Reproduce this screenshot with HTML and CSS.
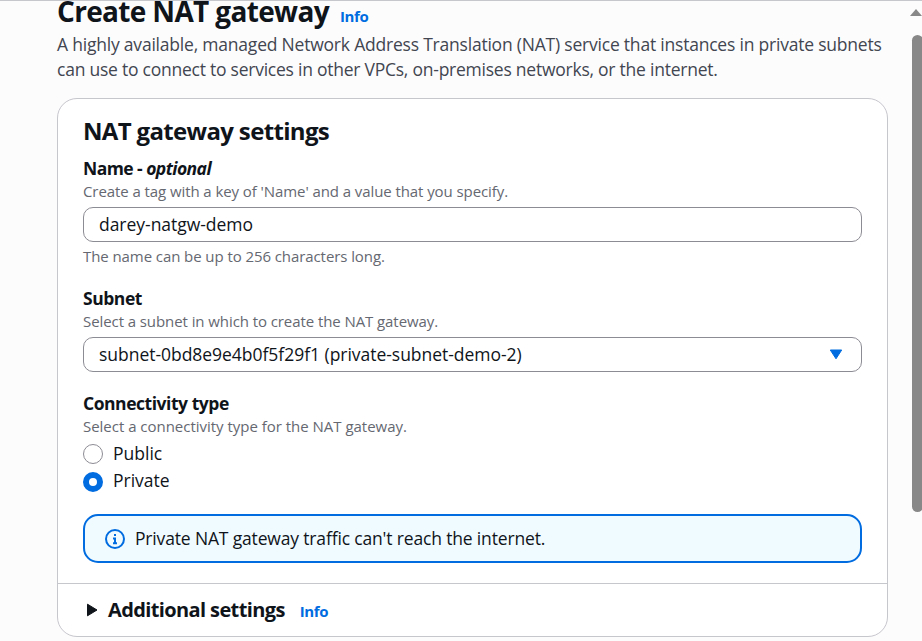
FILE: index.html
```html
<!DOCTYPE html>
<html lang="en">
<head>
<meta charset="utf-8">
<title>Create NAT gateway</title>
<link rel="stylesheet" href="styles.css">
</head>
<body>
<main class="page">
  <header class="head">
    <div class="title-row"><h1>Create NAT gateway</h1><a class="info">Info</a></div>
    <p class="intro">A highly available, managed Network Address Translation (NAT) service that instances in private subnets<br><span class="tight">can use to connect to services in other VPCs, on-premises networks, or the internet.</span></p>
  </header>
  <section class="card">
    <div class="body">
      <h2>NAT gateway settings</h2>
      <div class="field name">
        <label>Name - <em>optional</em></label>
        <p class="hint">Create a tag with a key of 'Name' and a value that you specify.</p>
        <div class="input"><span>darey-natgw-demo</span></div>
        <p class="hint below">The name can be up to 256 characters long.</p>
      </div>
      <div class="field subnet">
        <label>Subnet</label>
        <p class="hint">Select a subnet in which to create the NAT gateway.</p>
        <div class="input"><span>subnet-0bd8e9e4b0f5f29f1 (private-subnet-demo-2)</span>
          <svg width="14" height="11" viewBox="0 0 14 11"><path d="M1.3 1h11.4L7 9.8z" fill="#006ce0" stroke="#006ce0" stroke-linejoin="round"/></svg></div>
      </div>
      <div class="field conn">
        <label>Connectivity type</label>
        <p class="hint">Select a connectivity type for the NAT gateway.</p>
        <div class="radios">
          <div class="radio"><i class="dot"></i><span>Public</span></div>
          <div class="radio"><i class="dot on"></i><span>Private</span></div>
        </div>
      </div>
      <div class="alert">
        <svg width="20" height="20" viewBox="0 0 20 20" fill="none" stroke="#006ce0" stroke-width="2"><circle cx="10" cy="10" r="9"/><path d="M9 6h2M8 9.4h2V14M8 14.2h4"/></svg>
        <span>Private NAT gateway traffic can't reach the internet.</span>
      </div>
    </div>
    <div class="more">
      <svg width="12" height="14" viewBox="0 0 12 14"><path d="M1.5 1.2v11.6L11 7z" fill="#0f141a" stroke="#0f141a" stroke-linejoin="round"/></svg>
      <h3>Additional settings</h3><a class="info">Info</a>
    </div>
  </section>
</main>
<aside class="scroll"><i class="up"></i><i class="thumb"></i></aside>
</body>
</html>
```
FILE: styles.css
```css
* { box-sizing: border-box; margin: 0; }
body { display: flex; height: 641px; overflow: hidden; border-top: 1px solid #c6c6cd; background: #fcfcfd; font: 17.5px/25px "Open Sans", "Noto Sans", sans-serif; color: #0f141a; }
.page { width: 830px; margin-left: 57px; flex: none; }
.title-row { display: flex; align-items: baseline; height: 32px; margin-top: -6px; white-space: nowrap; }
h1 { font-size: 28px; line-height: 32px; font-weight: 700; letter-spacing: -0.66px; }
.info { color: #006ce0; font-size: 15px; font-weight: 700; letter-spacing: -0.35px; margin-left: 11px; }
.intro { color: #424650; margin-top: 5px; white-space: nowrap; letter-spacing: -0.21px; }
.tight { letter-spacing: -0.24px; }
.card { margin-top: 16px; width: 831px; height: 539px; border: 1px solid #c6c6cd; border-radius: 20px; background: #fff; }
.body { padding: 16px 25px 0; height: 484px; }
h2 { font-size: 24px; line-height: 32px; letter-spacing: -0.66px; }
label { display: block; font-weight: 700; line-height: 25px; letter-spacing: -0.46px; }
.name label { letter-spacing: -0.56px; }
.hint { font-size: 15px; line-height: 20px; color: #656871; white-space: nowrap; letter-spacing: -0.08px; }
.conn .hint { letter-spacing: -0.02px; }
.input { display: flex; align-items: center; justify-content: space-between; width: 779px; height: 35px; margin-top: 6px; padding: 0 18px 1px 15px; border: 1px solid #8c8c94; border-radius: 10px; letter-spacing: -0.03px; }
.radios { margin-top: 4px; }
.radio { display: flex; align-items: center; height: 27px; gap: 10px; line-height: 24px; }
.radio span { margin-top: -1px; }
.dot { width: 20px; height: 20px; border: 1px solid #8c8c94; border-radius: 50%; }
.dot.on { border: 6px solid #006ce0; margin-top: 2px; }
.alert { display: flex; align-items: center; gap: 10px; width: 779px; height: 49px; margin-top: 20px; padding-left: 20px; border: 2px solid #006ce0; border-radius: 15px; background: #f0fbff; letter-spacing: -0.16px; }
.name { margin-top: 9px; }
.below { margin-top: 4px; }
.subnet { margin-top: 20px; }
.conn { margin-top: 19px; }
.more { display: flex; align-items: center; height: 53px; padding-left: 28px; border-top: 1px solid #c6c6cd; }
h3 { font-size: 20px; margin: -1px 0 0 10px; letter-spacing: -0.62px; }
.more .info { margin: 3px 0 0 15px; }
.scroll { width: 11px; margin-left: 24px; flex: none; }
.up { display: block; width: 0; margin: 8px 0 0 -1px; border: 6px solid transparent; border-top: 0; border-bottom: 7px solid #888; }
.thumb { display: block; width: 11px; height: 477px; margin: 19px 0 0 1px; border-radius: 5.5px; background: #888; }
```
